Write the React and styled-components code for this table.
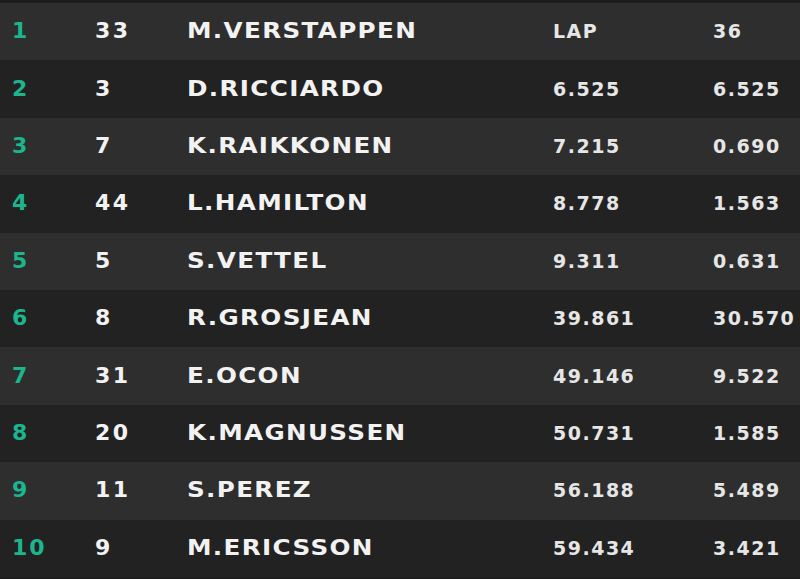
import React from "react";
import styled, { createGlobalStyle } from "styled-components";

const GlobalStyle = createGlobalStyle`
  html, body {
    margin: 0;
    padding: 0;
    background: #1c1c1c;
  }
  body {
    font-family: "DejaVu Sans", "Liberation Sans", sans-serif;
  }
`;

const Board = styled.div`
  width: 800px;
  height: 579px;
  padding: 3px 0 2px;
  box-sizing: border-box;
  background: #1c1c1c;
  display: flex;
  flex-direction: column;
`;

const Row = styled.div`
  flex: 1;
  display: grid;
  grid-template-columns: 83px 92px 366px 160px 1fr;
  align-items: center;
  padding-left: 12px;
  background: ${(p) => (p.$alt ? "#222222" : "#2e2e2e")};
  color: #f2f2f2;
  font-weight: 700;
  overflow: hidden;
`;

const Pos = styled.span`
  color: #1bb58e;
  font-size: 22px;
  letter-spacing: 2px;
  margin-top: -2px;
`;

const Num = styled.span`
  font-size: 22px;
  letter-spacing: 2.5px;
  margin-top: -2px;
`;

// the broadcast font is an extended face, so stretch the bold sans a little
const Driver = styled.span`
  display: inline-block;
  justify-self: start;
  font-size: 22px;
  letter-spacing: 1.2px;
  transform: scaleX(1.12);
  transform-origin: left center;
  margin-top: -2px;
  white-space: nowrap;
`;

const Time = styled.span`
  font-size: 19px;
  letter-spacing: 1.5px;
  color: #e6e6e6;
  margin-top: -1px;
`;

const rows = [
  [1, 33, "M.VERSTAPPEN", "LAP", "36"],
  [2, 3, "D.RICCIARDO", "6.525", "6.525"],
  [3, 7, "K.RAIKKONEN", "7.215", "0.690"],
  [4, 44, "L.HAMILTON", "8.778", "1.563"],
  [5, 5, "S.VETTEL", "9.311", "0.631"],
  [6, 8, "R.GROSJEAN", "39.861", "30.570"],
  [7, 31, "E.OCON", "49.146", "9.522"],
  [8, 20, "K.MAGNUSSEN", "50.731", "1.585"],
  [9, 11, "S.PEREZ", "56.188", "5.489"],
  [10, 9, "M.ERICSSON", "59.434", "3.421"],
];

export default function App() {
  return (
    <>
      <GlobalStyle />
      <Board>
        {rows.map(([pos, num, name, gap, interval], i) => (
          <Row key={pos} $alt={i % 2 === 1}>
            <Pos>{pos}</Pos>
            <Num>{num}</Num>
            <Driver>{name}</Driver>
            <Time>{gap}</Time>
            <Time>{interval}</Time>
          </Row>
        ))}
      </Board>
    </>
  );
}
